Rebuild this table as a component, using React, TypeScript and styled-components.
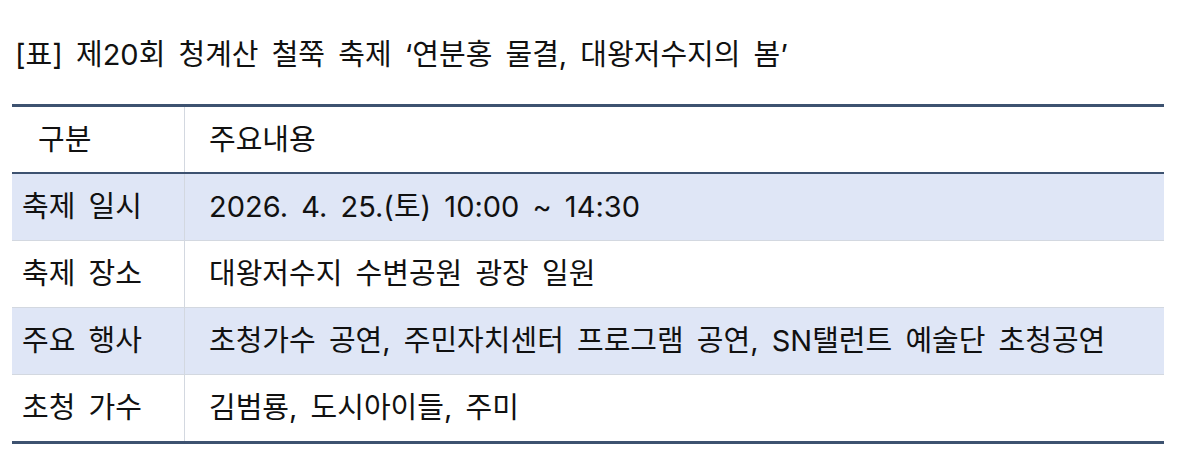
import styled, { createGlobalStyle } from 'styled-components'

const GlobalStyle = createGlobalStyle`
  html, body {
    margin: 0;
    padding: 0;
    background: #ffffff;
  }
  body {
    font-family: Inter, 'Noto Sans CJK KR', sans-serif;
    color: #111111;
    word-spacing: 5px;
  }
`

const rows = [
  { label: '축제 일시', content: '2026. 4. 25.(토) 10:00 ~ 14:30' },
  { label: '축제 장소', content: '대왕저수지 수변공원 광장 일원' },
  { label: '주요 행사', content: '초청가수 공연, 주민자치센터 프로그램 공연, SN탤런트 예술단 초청공연' },
  { label: '초청 가수', content: '김범룡, 도시아이들, 주미' }
]

const App = () => {
  return (
    <Page>
      <GlobalStyle />
      <Title>[표] 제20회 청계산 철쭉 축제 ‘연분홍 물결, 대왕저수지의 봄’</Title>
      <Table>
        <thead>
          <tr>
            <HeadCell $label>구분</HeadCell>
            <HeadCell>주요내용</HeadCell>
          </tr>
        </thead>
        <tbody>
          {rows.map((row, i) => (
            <BodyRow key={row.label} $shaded={i % 2 === 0}>
              <LabelCell>{row.label}</LabelCell>
              <ContentCell>{row.content}</ContentCell>
            </BodyRow>
          ))}
        </tbody>
      </Table>
    </Page>
  )
}

export default App

const Page = styled.div`
  width: 1177px;
  height: 459px;
  padding: 0 13px 0 12px;
  box-sizing: border-box;
  overflow: hidden;
`

const Title = styled.div`
  padding: 34px 0 0 3px;
  height: 104px;
  box-sizing: border-box;
  font-size: 29px;
  line-height: 42px;
  white-space: nowrap;
`

const Table = styled.table`
  width: 1152px;
  border-collapse: collapse;
  border-top: 3px solid #3d5270;
  border-bottom: 3px solid #3d5270;
  font-size: 29px;
  line-height: 42px;
  white-space: nowrap;
`

const HeadCell = styled.th<{ $label?: boolean }>`
  height: 65px;
  padding: 0 0 0 ${({ $label }) => ($label ? '26px' : '24px')};
  text-align: left;
  font-weight: 400;
  border-bottom: 2px solid #3d5270;
  border-right: ${({ $label }) => ($label ? '1px solid #d3d8e0' : 'none')};
  width: ${({ $label }) => ($label ? '146px' : 'auto')};
  box-sizing: content-box;
`

const BodyRow = styled.tr<{ $shaded: boolean }>`
  background: ${({ $shaded }) => ($shaded ? '#dfe6f6' : '#ffffff')};
  border-bottom: 1px solid #d3d8e0;

  &:last-child {
    border-bottom: none;
  }
`

const LabelCell = styled.td`
  height: 66px;
  padding: 0 0 0 10px;
  border-right: 1px solid #d3d8e0;
`

const ContentCell = styled.td`
  padding: 0 0 0 24px;
`
